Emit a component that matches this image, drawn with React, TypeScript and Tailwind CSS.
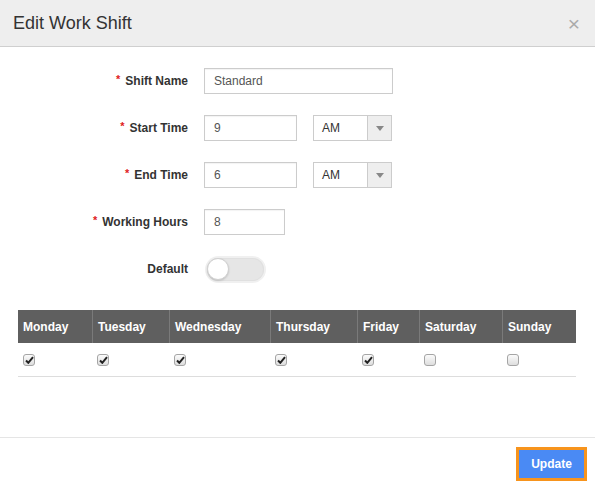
import React from "react";

const days: { name: string; width: string; checked: boolean }[] = [
  { name: "Monday", width: "w-[74px]", checked: true },
  { name: "Tuesday", width: "w-[77px]", checked: true },
  { name: "Wednesday", width: "w-[101px]", checked: true },
  { name: "Thursday", width: "w-[87px]", checked: true },
  { name: "Friday", width: "w-[62px]", checked: true },
  { name: "Saturday", width: "w-[83px]", checked: false },
  { name: "Sunday", width: "w-[74px]", checked: false },
];

function Label({ text, required }: { text: string; required?: boolean }) {
  return (
    <div className="flex w-[188px] shrink-0 items-center justify-end text-[12px] font-bold text-[#333]">
      {required ? (
        <span className="relative -top-[2px] mr-[5px] text-[11px] text-[#e02020]">*</span>
      ) : null}
      {text}
    </div>
  );
}

function TextBox({ value, width }: { value: string; width: string }) {
  return (
    <div
      className={`flex h-[26px] items-center border border-[#cccccc] bg-white px-[9px] text-[12px] text-[#555] shadow-[inset_0_1px_1px_rgba(0,0,0,0.05)] ${width}`}
    >
      {value}
    </div>
  );
}

function AmSelect() {
  return (
    <div className="ml-[16px] flex h-[26px] w-[79px] border border-[#cccccc] bg-white text-[12px] text-[#333]">
      <div className="flex flex-1 items-center pl-[8px]">AM</div>
      <div className="flex w-[24px] items-center justify-center border-l border-[#cccccc] bg-[#eeeeee]">
        <svg width="8" height="5" viewBox="0 0 8 5">
          <path d="M0 0 L8 0 L4 5 Z" fill="#888" />
        </svg>
      </div>
    </div>
  );
}

function Check({ checked }: { checked: boolean }) {
  return (
    <div className="flex h-[12px] w-[12px] items-center justify-center rounded-[3px] border border-[#a5a5a5] bg-gradient-to-b from-[#fbfbfb] to-[#dedede]">
      {checked ? (
        <svg width="9" height="8" viewBox="0 0 9 8">
          <path d="M1 4.5 L3.3 6.8 L8 1.2" stroke="#222" strokeWidth="2" fill="none" />
        </svg>
      ) : null}
    </div>
  );
}

export default function App() {
  return (
    <div className="h-[488px] w-[595px] bg-white font-['Liberation_Sans',Arial,sans-serif]">
      <header className="flex h-[47px] items-center justify-between border-b border-[#cfcfcf] bg-[#eeeeee] pl-[13px] pr-[15px]">
        <h1 className="text-[18px] text-[#333]">Edit Work Shift</h1>
        <span className="text-[21px] leading-none text-[#aaaaaa]">×</span>
      </header>

      <div className="h-[390px] pt-[21px]">
        <div className="flex flex-col gap-[21px]">
          <div className="flex h-[26px] items-center">
            <Label text="Shift Name" required />
            <div className="ml-[16px]">
              <TextBox value="Standard" width="w-[189px]" />
            </div>
          </div>
          <div className="flex h-[26px] items-center">
            <Label text="Start Time" required />
            <div className="ml-[16px] flex">
              <TextBox value="9" width="w-[93px]" />
              <AmSelect />
            </div>
          </div>
          <div className="flex h-[26px] items-center">
            <Label text="End Time" required />
            <div className="ml-[16px] flex">
              <TextBox value="6" width="w-[93px]" />
              <AmSelect />
            </div>
          </div>
          <div className="flex h-[26px] items-center">
            <Label text="Working Hours" required />
            <div className="ml-[16px]">
              <TextBox value="8" width="w-[81px]" />
            </div>
          </div>
          <div className="flex h-[26px] items-center">
            <Label text="Default" />
            <div className="ml-[17px] flex h-[27px] w-[61px] items-center rounded-full bg-[#f0f0f0] p-[2px]">
              <div className="flex h-full w-full items-center rounded-full bg-[#e6e6e6] shadow-[inset_0_0_0_1px_#e0e0e0]">
                <div className="h-[22px] w-[22px] rounded-full border border-[#d0d0d0] bg-white shadow-[0_1px_2px_rgba(0,0,0,0.15)]" />
              </div>
            </div>
          </div>
        </div>

        <div className="mx-[18px] mt-[28px] w-[558px]">
          <div className="flex h-[33px] bg-[#5f5f5f] text-[12px] font-bold text-white">
            {days.map((d, i) => (
              <div
                key={d.name}
                className={`flex items-center pl-[5px] ${d.width} ${i > 0 ? "border-l border-[#7a7a7a]" : ""}`}
              >
                {d.name}
              </div>
            ))}
          </div>
          <div className="flex h-[34px] border-b border-[#dddddd]">
            {days.map((d) => (
              <div key={d.name} className={`flex items-center pl-[5px] ${d.width}`}>
                <Check checked={d.checked} />
              </div>
            ))}
          </div>
        </div>
      </div>

      <footer className="flex h-[51px] items-start justify-end border-t border-[#e5e5e5] pr-[8px] pt-[9px]">
        <button
          type="button"
          className="h-[34px] w-[71px] border-[3px] border-[#f7941d] bg-[#4a8af4] text-[12px] font-bold text-white"
        >
          Update
        </button>
      </footer>
    </div>
  );
}
